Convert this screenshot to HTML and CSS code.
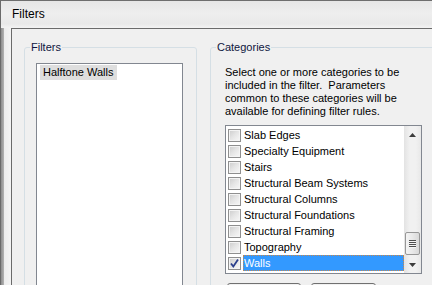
FILE: index.html
```html
<!doctype html>
<html lang="en">
  <head>
    <meta charset="UTF-8" />
    <meta name="viewport" content="width=device-width, initial-scale=1.0" />
    <title>Filters</title>
    <link rel="stylesheet" href="styles.css">
  </head>
  <body>
    <div class="window">
      <div class="titlebar">Filters</div>
      <div class="frame">
        <div class="frame-left"></div>
        <div class="client">
          <div class="group group-filters">
            <span class="group-title">Filters</span>
            <div class="listbox filter-list">
              <span class="filter-item">Halftone Walls</span>
            </div>
          </div>

          <div class="group group-categories">
            <span class="group-title">Categories</span>
            <p class="hint">
              Select one or more categories to be<br />
              included in the filter.&nbsp; Parameters<br />
              common to these categories will be<br />
              available for defining filter rules.
            </p>
            <div class="listbox category-list">
              <div class="items">
                <div class="row"><span class="check"></span><span class="label">Slab Edges</span></div>
                <div class="row"><span class="check"></span><span class="label">Specialty Equipment</span></div>
                <div class="row"><span class="check"></span><span class="label">Stairs</span></div>
                <div class="row"><span class="check"></span><span class="label">Structural Beam Systems</span></div>
                <div class="row"><span class="check"></span><span class="label">Structural Columns</span></div>
                <div class="row"><span class="check"></span><span class="label">Structural Foundations</span></div>
                <div class="row"><span class="check"></span><span class="label">Structural Framing</span></div>
                <div class="row"><span class="check"></span><span class="label">Topography</span></div>
                <div class="row selected">
                  <span class="check checked">
                    <svg width="11" height="11" viewBox="0 0 11 11">
                      <path d="M2 5.5 L4.3 8.5 L9 1.5" fill="none" stroke="#2b3f8c" stroke-width="1.8" />
                    </svg>
                  </span>
                  <span class="label">Walls</span>
                </div>
              </div>
              <div class="scrollbar">
                <div class="sb-btn">
                  <svg width="7" height="4" viewBox="0 0 7 4"><path d="M0 4 L3.5 0 L7 4 Z" fill="#3c3c3c" /></svg>
                </div>
                <div class="sb-track"></div>
                <div class="sb-thumb"><span class="grip"></span></div>
                <div class="sb-btn">
                  <svg width="7" height="4" viewBox="0 0 7 4"><path d="M0 0 L3.5 4 L7 0 Z" fill="#3c3c3c" /></svg>
                </div>
              </div>
            </div>
            <div class="buttons">
              <button class="btn btn-wide"></button>
              <button class="btn"></button>
            </div>
          </div>
        </div>
      </div>
    </div>
  </body>
</html>
```

FILE: styles.css
```css
body {
  margin: 0;
  width: 432px;
  height: 285px;
  overflow: hidden;
  font-family: "Liberation Sans", Arial, sans-serif;
  font-size: 11px;
  color: #000;
  background-color: #f0f0f0;
}

.window {
  display: flex;
  flex-direction: column;
  height: 285px;
  border-left: 1px solid #6a6a6a;
  box-sizing: border-box;
}

.titlebar {
  height: 28px;
  box-sizing: border-box;
  border-top: 1px solid #6e6e6e;
  padding-left: 11px;
  line-height: 27px;
  font-size: 12px;
  background: linear-gradient(#e6e6e6 0, #eeeeee 45%, #e9e9e9 85%, #f3f3f3 100%);
}

.frame {
  display: flex;
  flex: 1;
  min-height: 0;
}

.frame-left {
  width: 10px;
  background: linear-gradient(to right, #8c8c8c 0, #b4b4b4 3px, #ececec 3px, #f4f4f4 10px);
}

.client {
  flex: 1;
  display: flex;
  align-items: flex-start;
  gap: 13px;
  padding: 18px 0 0 12px;
  background-color: #f0f0f0;
  border-top: 1px solid #6b6b6b;
  border-left: 1px solid #6b6b6b;
  overflow: hidden;
}

/* group boxes */
.group {
  position: relative;
  flex-shrink: 0;
  box-sizing: border-box;
  border: 1px solid #d5dfe5;
  border-radius: 3px;
}

.group-title {
  position: absolute;
  top: -7px;
  left: 5px;
  padding: 0 1px;
  line-height: 13px;
  background-color: #f0f0f0;
  color: #0f1640;
}

.group-filters {
  width: 173px;
  height: 260px;
  padding: 15px 13px 0 11px;
}

.group-categories {
  width: 240px;
  height: 260px;
  padding: 18px 0 0 14px;
}

.hint {
  margin: 0;
  line-height: 13px;
}

/* list boxes */
.listbox {
  border: 1px solid #828790;
  background-color: #fff;
  box-sizing: border-box;
}

.filter-list {
  height: 240px;
  padding: 1px 3px;
}

.filter-item {
  display: inline-block;
  padding: 0 3px;
  line-height: 15px;
  background-color: #dedede;
}

.category-list {
  display: flex;
  width: 197px;
  height: 149px;
  margin-top: 7px;
}

.items {
  flex: 1;
  padding: 1px 0 2px 1px;
}

.row {
  display: flex;
  align-items: center;
  height: 16px;
}

.check {
  display: flex;
  align-items: center;
  justify-content: center;
  width: 13px;
  height: 13px;
  margin: 0 1px 0 1px;
  box-sizing: border-box;
  border: 1px solid #8f8f8f;
  box-shadow: inset 0 0 0 1px #f4f4f4;
  background: linear-gradient(135deg, #cbcbcb 0, #e6e6e6 50%, #f8f8f8 100%);
}

.label {
  flex: 1;
  margin-left: 1px;
  line-height: 14px;
  border: 1px solid transparent;
}

.row.selected .label {
  background-color: #3399ff;
  color: #fff;
  border: 1px dotted #c8874a;
}

/* scrollbar */
.scrollbar {
  display: flex;
  flex-direction: column;
  width: 17px;
  background: linear-gradient(to right, #e3e3e3 0, #f1f1f1 35%, #f1f1f1 70%, #e8e8e8 100%);
}

.sb-btn {
  display: flex;
  align-items: center;
  justify-content: center;
  height: 17px;
}

.sb-track {
  flex: 1;
}

.sb-thumb {
  display: flex;
  align-items: center;
  justify-content: center;
  height: 21px;
  margin: 0 1px 1px 1px;
  border: 1px solid #979797;
  border-radius: 2px;
  background: linear-gradient(to right, #f4f4f4 0, #e9e9e9 50%, #d9d9d9 100%);
}

.grip {
  width: 7px;
  height: 8px;
  background: repeating-linear-gradient(#4f4f4f 0, #4f4f4f 1px, #f4f4f4 1px, #f4f4f4 2px);
}

/* buttons below the list */
.buttons {
  display: flex;
  gap: 10px;
  margin: 9px 0 0 2px;
}

.btn {
  width: 74px;
  height: 23px;
  padding: 0;
  border: 1px solid #707070;
  border-radius: 3px;
  background: linear-gradient(#f2f2f2, #dddddd);
}

.btn-wide {
  width: 74px;
}

.buttons .btn:last-child {
  width: 65px;
}
```
